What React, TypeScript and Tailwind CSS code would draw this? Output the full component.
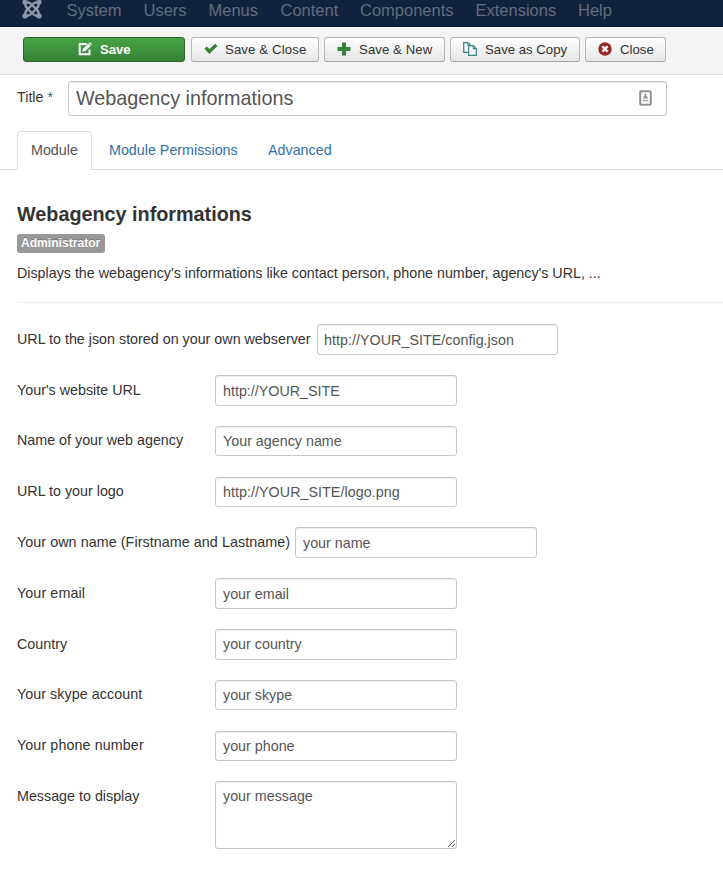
import React from 'react';

const menu = [
  { label: 'System', cls: 'w-[77px]' },
  { label: 'Users', cls: 'w-[65px]' },
  { label: 'Menus', cls: 'w-[72px]' },
  { label: 'Content', cls: 'w-[79.5px]' },
  { label: 'Components', cls: 'w-[115.5px]' },
  { label: 'Extensions', cls: 'w-[102.5px]' },
  { label: 'Help', cls: '' },
];

const fields = [
  { label: "Your's website URL", value: 'http://YOUR_SITE', row: 'h-[50px]', box: 'h-[31px]', text: 'w-[193px] pt-[5px]' },
  { label: 'Name of your web agency', value: 'Your agency name', row: 'h-[51px]', box: 'mt-px h-[30px]', text: 'w-[193px] pt-[5px]' },
  { label: 'URL to your logo', value: 'http://YOUR_SITE/logo.png', row: 'h-[51px]', box: 'mt-px h-[30px] tracking-[0.04px]', text: 'w-[193px] pt-[5px]' },
  { label: 'Your own name (Firstname and Lastname)', value: 'your name', row: 'h-[51px]', box: 'h-[31px]', text: 'w-[273px] pt-[5px] tracking-[0.07px]' },
  { label: 'Your email', value: 'your email', row: 'h-[51px]', box: 'h-[31px]', text: 'w-[193px] pt-[5px] tracking-[0.1px]' },
  { label: 'Country', value: 'your country', row: 'h-[51px]', box: 'h-[31px] pb-px', text: 'w-[193px] pt-[5px]' },
  { label: 'Your skype account', value: 'your skype', row: 'h-[51px]', box: 'h-[30px]', text: 'w-[193px] pt-[4px] tracking-[0.05px]' },
  { label: 'Your phone number', value: 'your phone', row: 'h-[50px]', box: 'h-[30px]', text: 'w-[193px] pt-[4px] tracking-[0.1px]' },
];

const inputCls =
  'block shrink-0 rounded-[3px] border border-[#c8c8c8] bg-white text-[14.3px] text-[#555] outline-none shadow-[inset_0_1px_1px_rgba(0,0,0,0.075)]';

const btnCls =
  'flex h-[25px] shrink-0 items-center rounded-[3px] border border-[#b8b8b8] border-b-[#a5a5a5] bg-linear-to-b from-white to-[#e6e6e6] text-[13.2px] text-[#333]';

function JoomlaLogo() {
  return (
    <svg width="20" height="20" viewBox="0 0 20 20" fill="none" stroke="#8f98a8">
      <g strokeWidth="2.300" strokeLinejoin="round">
        <path d="M3.500 3.500C2.800 6 3.800 8 5.200 9.400L10.600 14.800C12 16.200 14 17.200 16.500 16.500" />
        <path d="M3.500 3.500C6 2.800 8 3.800 9.400 5.200L14.800 10.600C16.200 12 17.200 14 16.500 16.500" />
        <path d="M16.500 3.500C17.200 6 16.200 8 14.800 9.400L9.400 14.800C8 16.200 6 17.200 3.500 16.500" />
        <path d="M16.500 3.500C14 2.800 12 3.800 10.600 5.200L5.200 10.600C3.800 12 2.800 14 3.500 16.500" />
      </g>
      <g fill="#8f98a8" stroke="none">
        <circle cx="3" cy="3.100" r="2.600" />
        <circle cx="17" cy="3.100" r="2.600" />
        <circle cx="3" cy="16.900" r="2.600" />
        <circle cx="17" cy="16.900" r="2.600" />
      </g>
    </svg>
  );
}

function EditIcon() {
  return (
    <svg width="14" height="14" viewBox="0 0 14 14" fill="none">
      <path d="M8.500 2H1.700V12.300H11.500V7.500" stroke="#fff" strokeWidth="2" />
      <path d="M4.200 9.800L5 6.800L10.300 1.500L12.700 3.800L7.300 9.100Z" fill="#fff" />
      <path d="M10.900 1L11.800 0.200L14 2.300L13.200 3.200Z" fill="#fff" />
    </svg>
  );
}

function CheckIcon() {
  return (
    <svg width="14" height="12" viewBox="0 0 14 12" className="-mt-[2px]">
      <path d="M0.500 5.800L2.700 3.600L5.300 6L11.300 0.700L13.500 2.900L5.300 10.900Z" fill="#378137" />
    </svg>
  );
}

function PlusIcon() {
  return (
    <svg width="14" height="14" viewBox="0 0 14 14" className="-mt-[2px]">
      <path d="M5 0.500H9V5H13.500V9H9V13.500H5V9H0.500V5H5Z" fill="#378137" />
    </svg>
  );
}

function CopyIcon() {
  return (
    <svg width="14" height="14" viewBox="0 0 14 14" fill="none" stroke="#3d8584" strokeWidth="1.200" className="-mt-[2px]">
      <path d="M5.200 10.400H0.700V0.700H5L8 3.700V4" />
      <path d="M5 0.700V3.700H8" />
      <path d="M5.700 3.700H10.300L13.300 6.700V13.300H5.700Z" fill="#fafafa" />
      <path d="M10.300 3.700V6.700H13.300" />
    </svg>
  );
}

function CancelIcon() {
  return (
    <svg width="14" height="14" viewBox="0 0 14 14" className="-mt-[2px]">
      <circle cx="7" cy="7" r="6.700" fill="#942a25" />
      <path d="M4.400 4.400L9.600 9.600M9.600 4.400L4.400 9.600" stroke="#fff" strokeWidth="2.200" />
    </svg>
  );
}

function ContactIcon() {
  return (
    <svg width="13" height="16" viewBox="0 0 13 16" fill="none" className="-mt-px">
      <rect x="1.200" y="1.200" width="10.600" height="13.600" rx="1" stroke="#929292" strokeWidth="2" />
      <circle cx="6.500" cy="4.800" r="1.100" fill="#888" />
      <path d="M4 8.500C4 6.500 5 6 6.500 6S9 6.500 9 8.500Z" fill="#999" />
      <path d="M3.800 10.500H9.200" stroke="#aaa" strokeWidth="1.500" />
    </svg>
  );
}

export default function App() {
  return (
    <div className="h-[874px] w-[723px] overflow-hidden bg-white font-['Liberation_Sans',Arial,sans-serif] text-[14.3px] leading-5 text-[#333]">
      <nav className="flex h-[27px] border-b border-[#0b1730] bg-[#10223e] text-[16.5px] text-[#626d7e]">
        <div className="-mt-px ml-[22px] w-[44.5px]">
          <JoomlaLogo />
        </div>
        {menu.map((m) => (
          <span key={m.label} className={`${m.cls} shrink-0 whitespace-nowrap`}>
            {m.label}
          </span>
        ))}
      </nav>

      <div className="flex h-12 gap-[5px] border-b border-[#ddd] bg-[#f4f4f4] pt-[10px] pl-[23px]">
        <button className="mr-px flex h-[25px] w-[162px] shrink-0 items-center rounded-[3px] border border-[#2b662b] bg-linear-to-b from-[#46a546] to-[#378137] pl-[54px] text-[13.2px] font-bold text-white">
          <span className="-mt-[2px]">
            <EditIcon />
          </span>
          <span className="ml-2 tracking-[-0.1px]">Save</span>
        </button>
        <button className={`${btnCls} w-[128px] pl-3`}>
          <CheckIcon />
          <span className="ml-[7px] tracking-[0.12px]">Save &amp; Close</span>
        </button>
        <button className={`${btnCls} w-[121px] pl-3`}>
          <PlusIcon />
          <span className="ml-2 tracking-[0.08px]">Save &amp; New</span>
        </button>
        <button className={`${btnCls} w-[130px] pl-3`}>
          <CopyIcon />
          <span className="ml-2">Save as Copy</span>
        </button>
        <button className={`${btnCls} w-[81px] pl-3`}>
          <CancelIcon />
          <span className="ml-2">Close</span>
        </button>
      </div>

      <main className="pl-[17px]">
        <div className="flex h-[56px] pt-[6px]">
          <label className="w-[51px] pt-[6px]">
            Title <span className="text-[#41617f]">*</span>
          </label>
          <div className="flex h-[35px] w-[599px] items-center rounded-[3px] border border-[#c8c8c8] pr-[14px] pl-[7px] shadow-[inset_0_1px_1px_rgba(0,0,0,0.075)]">
            <input
              className="min-w-0 flex-1 bg-transparent text-[19.8px] text-[#555] outline-none"
              defaultValue="Webagency informations"
            />
            <ContactIcon />
          </div>
        </div>

        <div className="-ml-[17px] flex h-[39px] border-b border-[#ddd] pl-[17px]">
          <div className="-mb-px h-[39px] w-[75px] rounded-t-[4px] border border-b-0 border-[#ddd] bg-white pt-[8px] pl-[13px] text-[#555]">
            Module
          </div>
          <a className="ml-[17px] w-[159px] pt-[9px] text-[#3071a9]">Module Permissions</a>
          <a className="pt-[9px] text-[#3071a9]">Advanced</a>
        </div>

        <h3 className="mt-[34px] text-[19.8px] leading-5 font-bold">Webagency informations</h3>
        <div className="mt-[10px] flex">
          <span className="h-[19px] w-[88px] rounded-[3px] bg-[#999] pl-1 text-[12.1px] leading-[18px] font-bold text-white [text-shadow:0_-1px_0_rgba(0,0,0,0.25)]">
            Administrator
          </span>
        </div>
        <p className="mt-[10px] tracking-[-0.012px]">
          Displays the webagency's informations like contact person, phone number, agency's URL, ...
        </p>
        <hr className="mt-[19px] border-[#eee]" />

        <form className="pt-[21px]">
          <div className="flex h-[51px]">
            <label className="mr-[5px] w-[295px] shrink-0 pt-[5px] whitespace-nowrap">
              URL to the json stored on your own webserver
            </label>
            <input
              className={`${inputCls} h-[31px] w-[241px] pl-[6px] tracking-[0.03px]`}
              defaultValue="http://YOUR_SITE/config.json"
            />
          </div>
          {fields.map((f) => (
            <div key={f.label} className={`flex ${f.row}`}>
              <label className={`mr-[5px] shrink-0 whitespace-nowrap ${f.text}`}>{f.label}</label>
              <input className={`${inputCls} ${f.box} w-[242px] pl-[7px]`} defaultValue={f.value} />
            </div>
          ))}
          <div className="flex">
            <label className="mr-[5px] w-[193px] pt-[5px]">Message to display</label>
            <textarea className={`${inputCls} h-[68px] w-[242px] resize py-[4px] pl-[7px]`} defaultValue="your message" />
          </div>
        </form>
      </main>
    </div>
  );
}
